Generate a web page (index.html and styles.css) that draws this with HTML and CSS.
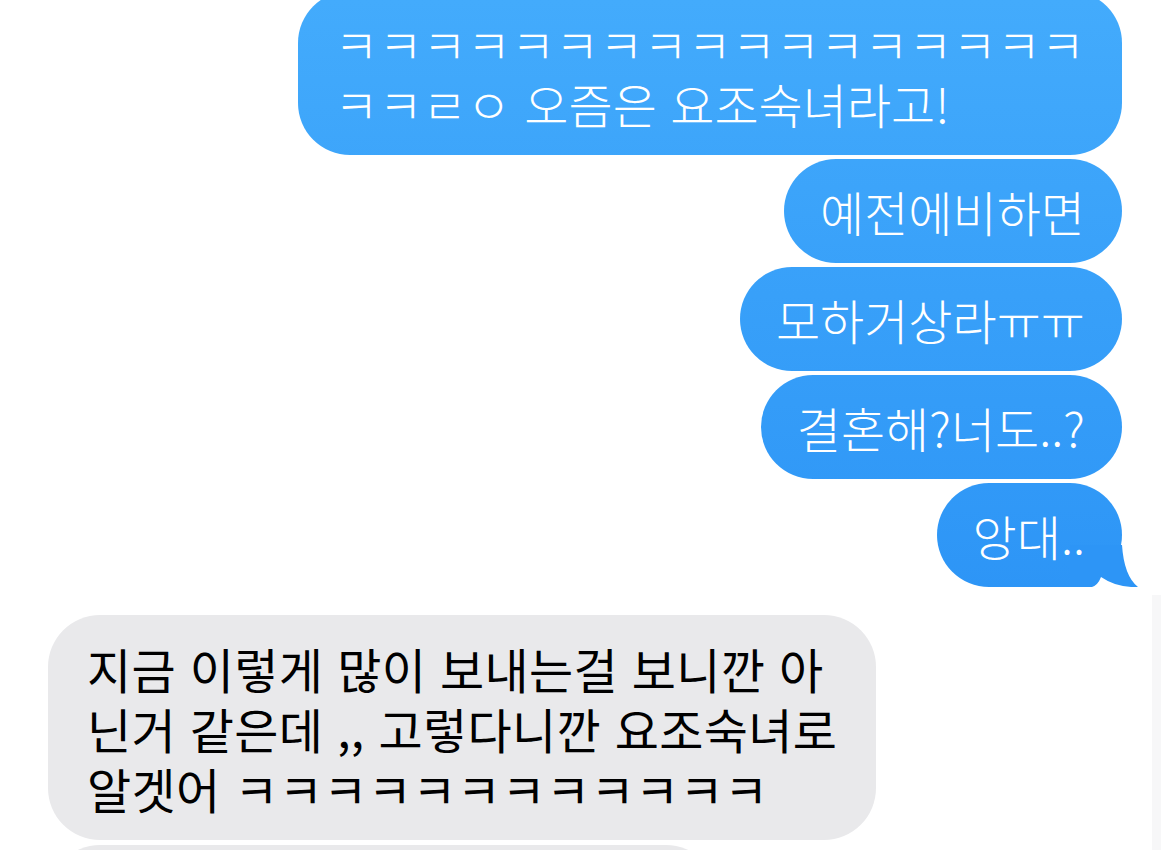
FILE: index.html
```html
<!DOCTYPE html>
<html lang="ko">
<head>
<meta charset="utf-8">
<link rel="stylesheet" href="styles.css">
</head>
<body>
<div class="chat">
  <div class="row out"><div class="bubble blue">ㅋㅋㅋㅋㅋㅋㅋㅋㅋㅋㅋㅋㅋㅋㅋㅋㅋ<br>ㅋㅋㄹㅇ 오즘은 요조숙녀라고!</div></div>
  <div class="row out"><div class="bubble blue">예전에비하면</div></div>
  <div class="row out"><div class="bubble blue">모하거상라ㅠㅠ</div></div>
  <div class="row out"><div class="bubble blue">결혼해?너도..?</div></div>
  <div class="row out"><div class="bubble blue tailed">앙대..<svg class="tail" width="75" height="47" viewBox="0 0 75 47"><path d="M5 47 L27 47 Q33 45 36 37 Q52 48 73 47 Q59 36 57 5 L5 5 Z"/></svg></div></div>
  <div class="row in first-in"><div class="bubble gray">지금 이렇게 많이 보내는걸 보니깐 아<br>닌거 같은데 ,, 고렇다니깐 요조숙녀로<br>알겟어 ㅋㅋㅋㅋㅋㅋㅋㅋㅋㅋㅋㅋ</div></div>
  <div class="row in next-in"><div class="bubble gray stub"></div></div>
</div>
<div class="scroll-strip"></div>
</body>
</html>
```
FILE: styles.css
```css
html, body {
  margin: 0;
  padding: 0;
  background: #ffffff;
  overflow: hidden;
  height: 850px;
}
body {
  position: relative;
  font-family: "Noto Sans CJK KR", "Noto Sans", sans-serif;
}
.chat {
  display: flex;
  flex-direction: column;
  gap: 4px;
  padding: 0 48px;
  margin-top: -9px;
}
.row {
  display: flex;
}
.row.out {
  justify-content: flex-end;
}
.row.in {
  justify-content: flex-start;
}
.bubble {
  position: relative;
  isolation: isolate;
  box-sizing: border-box;
  border-radius: 52px;
  font-size: 48px;
  line-height: 60px;
  letter-spacing: 0;
  white-space: nowrap;
}
.blue {
  padding: 22px 37px 22px 36px;
  color: #ffffff;
  font-weight: 300;
  background: linear-gradient(to bottom, #43abfc 0px, #2d95f6 590px) fixed;
}
.gray {
  padding: 23px 39px 22px 39px;
  color: #000000;
  letter-spacing: 0.35px;
  background: #e9e9eb;
}
.tail {
  position: absolute;
  right: -18px;
  bottom: 0;
  z-index: -1;
  fill: #2d95f6;
}
.first-in {
  margin-top: 24px;
}
.next-in {
  margin-top: 1px;
}
.stub {
  width: 670px;
  height: 104px;
}
.scroll-strip {
  position: absolute;
  left: 1152px;
  top: 595px;
  width: 9px;
  bottom: 0;
  background: #f7f7f8;
}
```
